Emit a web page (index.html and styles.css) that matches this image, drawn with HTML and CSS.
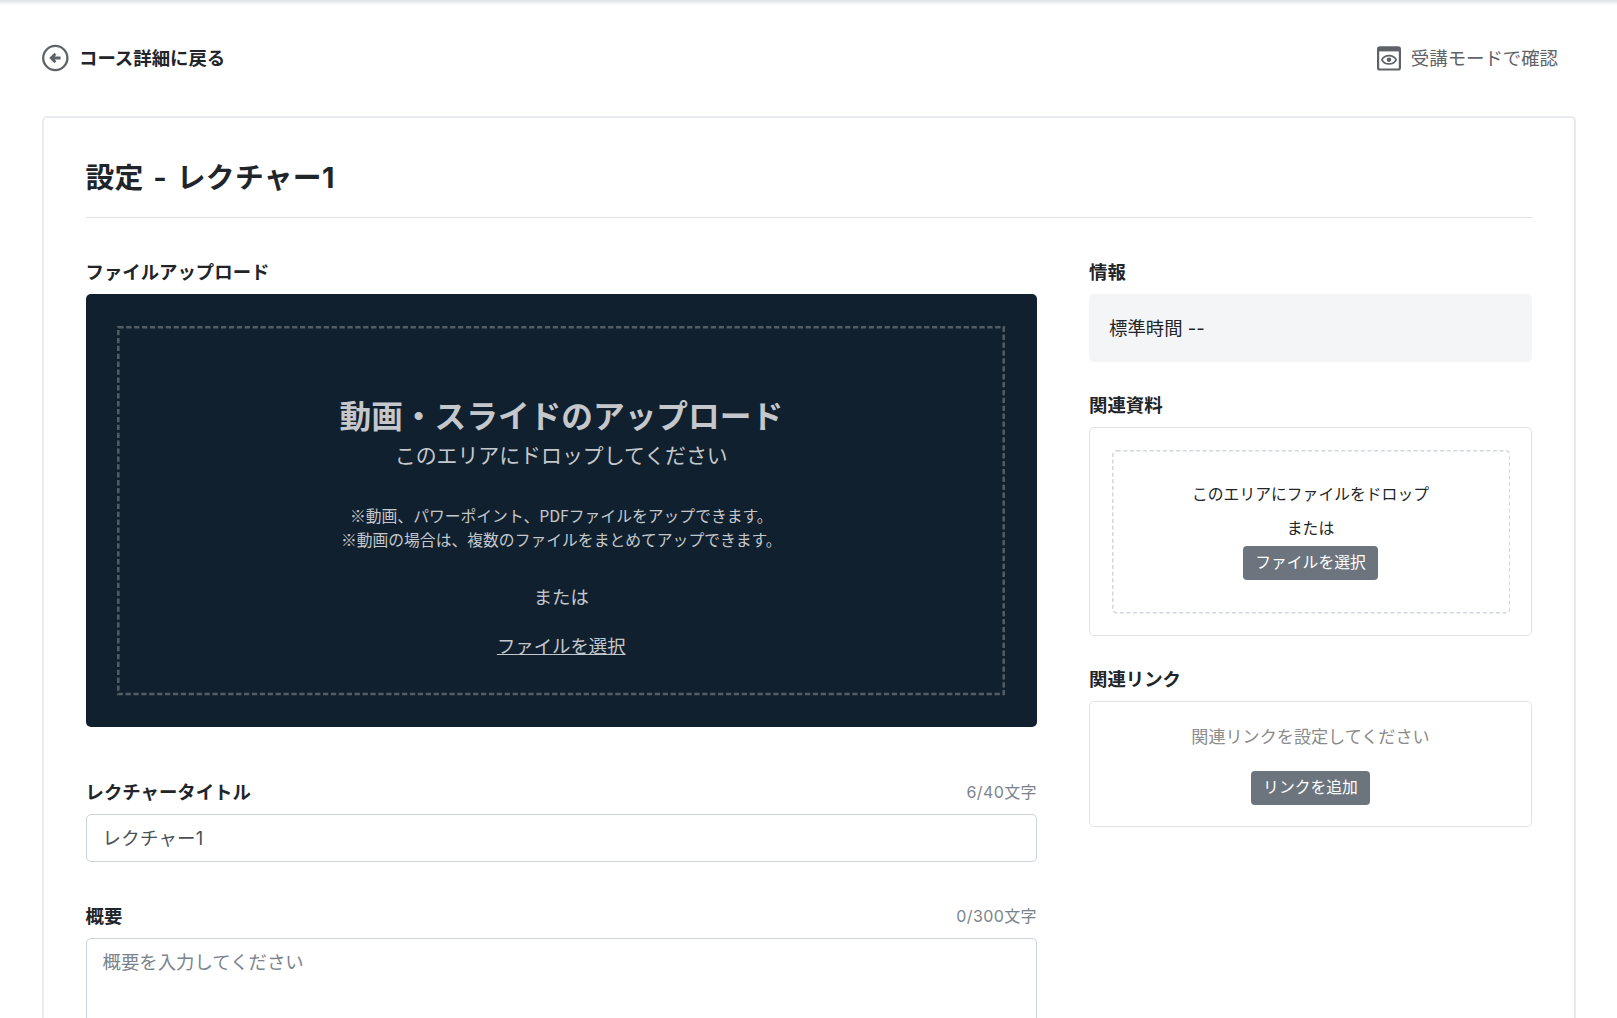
FILE: index.html
```html
<!DOCTYPE html>
<html lang="ja">
<head>
  <meta charset="UTF-8" />
  <meta name="viewport" content="width=device-width, initial-scale=1.0"/>
  <title>設定 - レクチャー1</title>
  <link rel="stylesheet" href="styles.css">
</head>
<body>
  <header class="page-nav">
    <a class="back-link" href="#">
      <svg width="28" height="28" viewBox="0 0 28 28" fill="none">
        <circle cx="14.3" cy="14" r="12.1" stroke="#5f6368" stroke-width="2.3"/>
        <path d="M19.6 14H11M14.4 9.8L10.2 14L14.4 18.2" stroke="#5f6368" stroke-width="2.8"/>
      </svg>
      <span>コース詳細に戻る</span>
    </a>
    <a class="preview-link" href="#">
      <svg width="24" height="25" viewBox="0 0 24 25" fill="none">
        <rect x="1.1" y="1.3" width="21.8" height="22.2" rx="1.8" stroke="#5f6368" stroke-width="2.2"/>
        <path d="M1 1.5H23V5.4H1Z" fill="#5f6368"/>
        <path d="M4.9 13.8C7.6 8.3 16.4 8.3 19.1 13.8C16.4 19.3 7.6 19.3 4.9 13.8Z" stroke="#5f6368" stroke-width="1.7"/>
        <circle cx="12" cy="13.8" r="2.3" fill="#5f6368"/>
      </svg>
      <span>受講モードで確認</span>
    </a>
  </header>

  <main class="card">
    <h1>設定 - レクチャー1</h1>

    <div class="columns">
      <section class="main-col">
        <h2 class="label">ファイルアップロード</h2>
        <div class="upload">
          <div class="upload-area">
            <svg class="dashes"><rect x="1.3" y="1.3" width="885.4" height="366.8"/></svg>
            <p class="upload-title">動画・スライドのアップロード</p>
            <p class="upload-sub">このエリアにドロップしてください</p>
            <p class="upload-note">※動画、パワーポイント、PDFファイルをアップできます。<br>※動画の場合は、複数のファイルをまとめてアップできます。</p>
            <p class="upload-or">または</p>
            <a class="upload-link" href="#">ファイルを選択</a>
          </div>
        </div>

        <div class="field">
          <div class="field-head">
            <label class="label" for="title">レクチャータイトル</label>
            <span class="counter">6/40文字</span>
          </div>
          <input id="title" type="text" value="レクチャー1">
        </div>

        <div class="field">
          <div class="field-head">
            <label class="label" for="summary">概要</label>
            <span class="counter">0/300文字</span>
          </div>
          <textarea id="summary" placeholder="概要を入力してください"></textarea>
        </div>
      </section>

      <aside class="side-col">
        <h2 class="label">情報</h2>
        <div class="info">標準時間 --</div>

        <h2 class="label">関連資料</h2>
        <div class="panel files">
          <div class="file-area">
            <svg class="dashes"><rect x="0.75" y="0.75" width="397" height="162" rx="4"/></svg>
            <p>このエリアにファイルをドロップ</p>
            <p>または</p>
            <button type="button">ファイルを選択</button>
          </div>
        </div>

        <h2 class="label">関連リンク</h2>
        <div class="panel links">
          <p>関連リンクを設定してください</p>
          <button type="button">リンクを追加</button>
        </div>
      </aside>
    </div>
  </main>
</body>
</html>
```
FILE: styles.css
```css
* {
  box-sizing: border-box;
}

body {
  margin: 0;
  height: 1018px;
  overflow: hidden;
  background: linear-gradient(#dfe1e8, #fff 5px) no-repeat #fff;
  color: #212529;
  font-family: Inter, "Noto Sans CJK JP", sans-serif;
  font-size: 18.4px;
  line-height: 28px;
}

h1,
h2,
p {
  margin: 0;
}

a {
  color: inherit;
  text-decoration: none;
}

.page-nav {
  display: flex;
  justify-content: space-between;
  padding: 44px 59px 0 41px;
}

.back-link,
.preview-link {
  display: flex;
  align-items: center;
  height: 28px;
}

.back-link {
  gap: 10px;
  font-weight: bold;
}

.preview-link {
  gap: 10px;
  color: #5f6368;
}

.card {
  margin: 44px 41px 0 42px;
  height: 902px;
  padding: 41px 42px 0 41.5px;
  border: 2px solid #e8ebef;
  border-bottom: 0;
  border-radius: 5px 5px 0 0;
  overflow: hidden;
}

h1 {
  height: 59px;
  border-bottom: 1px solid #dfe1e3;
  font-size: 28.8px;
  letter-spacing: 0.3px;
  line-height: 38px;
  word-spacing: 2.5px;
}

.columns {
  display: flex;
  gap: 52px;
  padding-top: 40px;
}

.main-col {
  width: 951.5px;
}

.side-col {
  flex: 1;
}

.label {
  height: 28px;
  margin-bottom: 8px;
  font-size: 18.4px;
  font-weight: bold;
  line-height: 28px;
}

/* Main upload */
.upload {
  height: 433px;
  padding: 31.5px;
  border-radius: 5px;
  background: #11202e;
  color: #c4c8cc;
  text-align: center;
}

.upload-area,
.file-area {
  position: relative;
}

.upload-area {
  height: 370px;
  padding-top: 71.5px;
}

.dashes {
  position: absolute;
  top: 0;
  left: 0;
  width: 100%;
  height: 100%;
  fill: none;
  pointer-events: none;
}

.upload .dashes {
  stroke: #535d66;
  stroke-width: 2.5;
  stroke-dasharray: 5.3 2.6;
}

.upload-title {
  font-size: 31.7px;
  font-weight: bold;
  line-height: 40px;
}

.upload-sub {
  font-size: 20.9px;
  line-height: 38px;
}

.upload-note {
  margin-top: 29px;
  font-family: "Noto Sans CJK JP", sans-serif;
  font-size: 15.8px;
  line-height: 24px;
}

.upload-or {
  margin-top: 31px;
}

.upload-link {
  display: block;
  margin-top: 21px;
  text-decoration: underline;
}

/* Text fields */
.field {
  margin-top: 40px;
}

.upload + .field {
  margin-top: 51px;
}

.field-head {
  display: flex;
  justify-content: space-between;
}

.counter {
  color: #7b848c;
  font-size: 16px;
  letter-spacing: 0.4px;
}

input,
textarea {
  display: block;
  width: 100%;
  border: 1px solid #ced4da;
  border-radius: 5px;
  outline: none;
  background: #fff;
  color: #495057;
  font: inherit;
  resize: none;
}

input {
  height: 48px;
  padding: 0 16px 2px;
  letter-spacing: 0.3px;
}

textarea {
  height: 140px;
  padding: 9px 16px;
}

::placeholder {
  color: #7b848c;
}

/* Side column */
.info {
  height: 68px;
  margin-bottom: 29px;
  padding: 20px;
  border-radius: 5px;
  background: #f4f5f7;
}

.panel {
  border: 1px solid #dfe3e8;
  border-radius: 5px;
  text-align: center;
}

.files {
  height: 209px;
  margin-bottom: 29px;
  padding: 21.5px;
}

.file-area {
  height: 164px;
  padding-top: 28.5px;
  font-size: 15.8px;
  line-height: 34px;
}

.files .dashes {
  stroke: #d2d8de;
  stroke-width: 1.5;
  stroke-dasharray: 4 2.6;
}

.links {
  height: 126px;
  padding-top: 20.5px;
}

.links p {
  margin-bottom: 20.5px;
  color: #8b8b8b;
  font-size: 17.1px;
}

button {
  height: 34px;
  padding: 0 12px;
  border: 0;
  border-radius: 4px;
  background: #6c757d;
  color: #fff;
  font-family: inherit;
  font-size: 15.8px;
  line-height: 34px;
  vertical-align: top;
  cursor: pointer;
}
```
